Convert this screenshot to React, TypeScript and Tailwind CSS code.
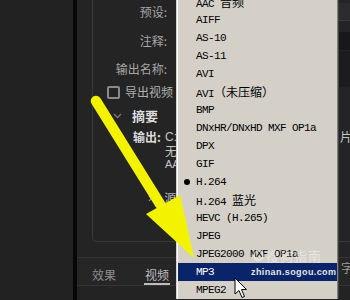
import React from "react";

const M = ({ t }: { t: string }) => (
  <span className="tracking-[-0.6px] whitespace-pre">{t}</span>
);
const C = ({ t }: { t: string }) => (
  <span className="text-[12px] tracking-normal [font-family:'Noto_Sans_CJK_SC',sans-serif]">{t}</span>
);

const rows: { key: string; node: React.ReactNode; bullet?: boolean; active?: boolean }[] = [
  { key: "aac", node: (<><M t="AAC " /><C t="音频" /></>) },
  { key: "aiff", node: <M t="AIFF" /> },
  { key: "as10", node: <M t="AS-10" /> },
  { key: "as11", node: <M t="AS-11" /> },
  { key: "avi", node: <M t="AVI" /> },
  { key: "avi2", node: (<><M t="AVI" /><C t="（未压缩）" /></>) },
  { key: "bmp", node: <M t="BMP" /> },
  { key: "dnx", node: <M t="DNxHR/DNxHD MXF OP1a" /> },
  { key: "dpx", node: <M t="DPX" /> },
  { key: "gif", node: <M t="GIF" /> },
  { key: "h264", node: <M t="H.264" />, bullet: true },
  { key: "h264b", node: (<><M t="H.264 " /><C t="蓝光" /></>) },
  { key: "hevc", node: <M t="HEVC (H.265)" /> },
  { key: "jpeg", node: <M t="JPEG" /> },
  { key: "j2k", node: <M t="JPEG2000 MXF OP1a" /> },
  { key: "mp3", node: <M t="MP3" />, active: true },
  { key: "mpeg2", node: <M t="MPEG2" /> },
];

const cjk = "[font-family:'Noto_Sans_CJK_SC',sans-serif]";

export default function App() {
  return (
    <div className="relative w-[350px] h-[300px] overflow-hidden flex bg-[#232323] [font-family:'Liberation_Sans','Noto_Sans_CJK_SC',sans-serif]">
      <div className="w-[73px] shrink-0 bg-[#222222]" />
      <div className="w-[4px] shrink-0 bg-[#070707]" />
      <div className="flex-1 flex flex-col bg-[#242424] min-w-0">
        {/* Settings box */}
        <div className="h-[242px] shrink-0 ml-[15px] border-l border-b border-[#383838] rounded-bl-[5px] flex flex-col">
          <div className="mt-[3px] h-[18px] flex items-center">
            <div className={"w-[74px] shrink-0 text-right text-[12px] leading-[16px] text-[#a6a6a6] " + cjk}>预设:</div>
            <div className="ml-[9px] w-[200px] shrink-0 h-[18px] bg-[#2c2c2c] border-b border-[#3a3a3a]" />
          </div>
          <div className="mt-[11px] h-[18px] flex items-center">
            <div className={"w-[74px] shrink-0 text-right text-[12px] leading-[16px] text-[#a6a6a6] " + cjk}>注释:</div>
            <div className="ml-[9px] w-[200px] shrink-0 h-[18px] bg-[#181818]" />
          </div>
          <div className="mt-[10px] h-[18px] flex items-center">
            <div className={"w-[74px] shrink-0 text-right text-[12px] leading-[16px] text-[#a6a6a6] whitespace-nowrap " + cjk}>输出名称:</div>
            <div className="ml-[9px] w-[200px] shrink-0 h-[36px] bg-[#1c1c1c]" />
          </div>
          <div className="mt-[7px] h-[14px] flex items-center">
            <div className="ml-[14px] w-[13px] h-[13px] shrink-0 border-2 border-[#8a8a8a] rounded-[2px]" />
            <div className={"ml-[5px] text-[12px] leading-[16px] text-[#b0b0b0] whitespace-nowrap " + cjk}>导出视频</div>
          </div>
          <div className="mt-[9px] h-[16px] flex items-center">
            <svg className="ml-[20px] shrink-0" width="9" height="6" viewBox="0 0 9 6">
              <path d="M1 1 L4.5 4.5 L8 1" stroke="#7a7a7a" strokeWidth="1.3" fill="none" />
            </svg>
            <div className={"ml-[10px] text-[13px] leading-[16px] font-bold text-[#dcdcdc] whitespace-nowrap " + cjk}>摘要</div>
          </div>
          <div className="mt-[5px] h-[16px] flex items-center">
            <div className={"ml-[40px] w-[32px] shrink-0 text-[12px] leading-[16px] font-bold text-[#dcdcdc] whitespace-nowrap " + cjk}>输出:</div>
            <div className="w-[187px] shrink-0 flex justify-between text-[12px] leading-[16px] text-[#c4c4c4]">
              <span>C:</span>
              <span className={cjk}>片</span>
            </div>
          </div>
          <div className="h-[12px] flex items-center">
            <div className={"ml-[72px] text-[12px] leading-[14px] text-[#c4c4c4] " + cjk}>无</div>
          </div>
          <div className="mt-[1px] h-[12px] flex items-center">
            <div className="ml-[72px] text-[11px] leading-[12px] text-[#c4c4c4]">AA</div>
          </div>
          <div className="mt-[20px] h-[16px] flex items-center">
            <div className="ml-[55px] text-[13px] leading-[16px] text-[#a0a0a0]">›</div>
            <div className={"ml-[12px] text-[12px] leading-[16px] text-[#b4b4b4] " + cjk}>源</div>
          </div>
        </div>
        {/* Tabs */}
        <div className={"mt-[15px] h-[29px] shrink-0 border-t border-b border-[#353535] bg-[#262626] flex text-[12px] leading-[16px] whitespace-nowrap " + cjk}>
          <div className="ml-[15px] mt-[9px] shrink-0 text-[#8e8e8e]">效果</div>
          <div className="ml-[29px] shrink-0 relative text-[#bdbdbd]">
            <div className="mt-[9px]">视频</div>
            <div className="absolute left-[-1px] right-[-1px] top-[25px] h-[2px] bg-[#bcbcbc]" />
          </div>
          <div className="ml-[172px] mt-[2px] shrink-0 text-[#9a9a9a]">字幕</div>
        </div>
        <div className="flex-1 bg-[#232323]" />
      </div>

      {/* Dropdown menu */}
      <div className="absolute left-[176px] top-[-9px] w-[163px] bg-[#d4d0c8] border-l border-t border-[#d4d0c8] border-r border-r-[#404040] shadow-[inset_1px_1px_0_#ffffff,inset_-1px_0_0_#808080] pt-[1px] px-[1px] [font-family:'Liberation_Mono',monospace] text-[11px] text-black">
        {rows.map((r) => (
          <div
            key={r.key}
            className={
              "relative h-[18px] flex items-center pl-[18px] whitespace-nowrap " +
              (r.active ? "bg-[#0a246a] text-white" : "")
            }
          >
            {r.bullet && (
              <span className="absolute left-[6px] top-[6px] w-[6px] h-[6px] rounded-full bg-black" />
            )}
            <span className="pt-[1px]">{r.node}</span>
          </div>
        ))}
        {/* watermark */}
        <div className="absolute left-[76px] top-[256px] flex items-center gap-[2px] opacity-45 text-white">
          <div className="w-[11px] h-[11px] rounded-full border-2 border-white" />
          <span className={"text-[13px] leading-[15px] tracking-[1px] " + cjk}>搜狗指南</span>
        </div>
        <div className="absolute left-[74px] top-[275px] text-[9px] leading-[10px] font-bold text-[#e4e4e4] tracking-[0.4px] [font-family:'Liberation_Sans',sans-serif]">
          zhinan.sogou.com
        </div>
      </div>

      {/* Yellow arrow */}
      <svg className="absolute left-0 top-0 pointer-events-none" width="350" height="300" viewBox="0 0 350 300">
        <line x1="96" y1="101" x2="160" y2="204" stroke="#f3f300" strokeWidth="10.5" strokeLinecap="round" />
        <polygon points="146,214 180,195 194,258" fill="#f3f300" />
      </svg>

      {/* Mouse cursor */}
      <svg className="absolute left-[234px] top-[277px] pointer-events-none" width="14" height="22" viewBox="0 0 14 22">
        <path d="M1 1 L1 17 L5 13.5 L8 20.5 L10.5 19.5 L7.5 12.5 L12.5 12.5 Z" fill="#ffffff" stroke="#000000" strokeWidth="1" strokeLinejoin="round" />
      </svg>
    </div>
  );
}
